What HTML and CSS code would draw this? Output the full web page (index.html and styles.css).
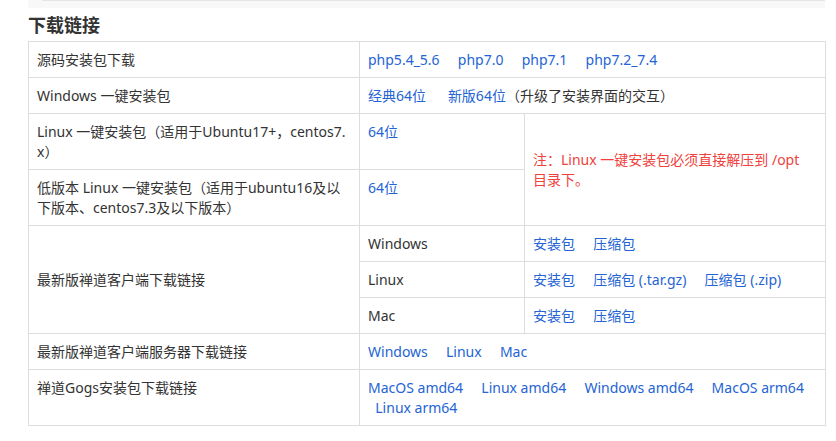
FILE: index.html
```html
<!DOCTYPE html>
<html lang="zh-CN">
<head>
<meta charset="utf-8">
<title>下载链接</title>
<link rel="stylesheet" href="styles.css">
</head>
<body>
<div class="page">
  <div class="codebar"><div class="scrollline"></div></div>
  <h2 class="title">下载链接</h2>
  <table class="dl">
    <colgroup><col class="c1"><col class="c2"><col class="c3"></colgroup>
    <tbody>
      <tr>
        <td>源码安装包下载</td>
        <td colspan="2"><a href="#">php5.4_5.6</a>&nbsp;&nbsp;&nbsp;&nbsp; <a href="#">php7.0</a>&nbsp;&nbsp;&nbsp;&nbsp; <a href="#">php7.1</a>&nbsp;&nbsp;&nbsp;&nbsp; <a href="#">php7.2_7.4</a></td>
      </tr>
      <tr>
        <td>Windows 一键安装包</td>
        <td colspan="2"><a href="#">经典64位</a>&nbsp;&nbsp;&nbsp;&nbsp;&nbsp; <a href="#">新版64位</a>（升级了安装界面的交互）</td>
      </tr>
      <tr>
        <td>Linux 一键安装包（适用于Ubuntu17+，centos7.x）</td>
        <td><a href="#">64位</a></td>
        <td rowspan="2" class="mid note">注：Linux 一键安装包必须直接解压到 /opt 目录下。</td>
      </tr>
      <tr>
        <td>低版本 Linux 一键安装包（适用于ubuntu16及以下版本、centos7.3及以下版本）</td>
        <td><a href="#">64位</a></td>
      </tr>
      <tr>
        <td rowspan="3" class="mid">最新版禅道客户端下载链接</td>
        <td>Windows</td>
        <td><a href="#">安装包</a>&nbsp;&nbsp;&nbsp;&nbsp; <a href="#">压缩包</a></td>
      </tr>
      <tr>
        <td>Linux</td>
        <td><a href="#">安装包</a>&nbsp;&nbsp;&nbsp;&nbsp; <a href="#">压缩包 (.tar.gz)</a>&nbsp;&nbsp;&nbsp;&nbsp; <a href="#">压缩包 (.zip)</a></td>
      </tr>
      <tr>
        <td>Mac</td>
        <td><a href="#">安装包</a>&nbsp;&nbsp;&nbsp;&nbsp; <a href="#">压缩包</a></td>
      </tr>
      <tr>
        <td>最新版禅道客户端服务器下载链接</td>
        <td colspan="2"><a href="#">Windows</a>&nbsp;&nbsp;&nbsp;&nbsp; <a href="#">Linux</a>&nbsp;&nbsp;&nbsp;&nbsp; <a href="#">Mac</a></td>
      </tr>
      <tr>
        <td>禅道Gogs安装包下载链接</td>
        <td colspan="2"><a href="#">MacOS amd64</a>&nbsp;&nbsp;&nbsp;&nbsp; <a href="#">Linux amd64</a>&nbsp;&nbsp;&nbsp;&nbsp; <a href="#">Windows amd64</a>&nbsp;&nbsp;&nbsp;&nbsp; <a href="#">MacOS arm64</a>&nbsp;&nbsp; &nbsp;&nbsp;<a href="#">Linux arm64</a></td>
      </tr>
    </tbody>
  </table>
</div>
</body>
</html>
```
FILE: styles.css
```css
html, body {
  margin: 0;
  padding: 0;
  background: #fff;
}
body {
  font-family: "Noto Sans", "Noto Sans CJK SC", sans-serif;
  font-size: 14px;
  color: #333;
}
.page {
  padding-left: 28px;
  width: 797px;
}
.codebar {
  height: 8px;
  background: #f8f8f8;
}
.scrollline {
  margin-left: 14px;
  border-top: 1px solid #e6e6e6;
}
.title {
  margin: 5px 0 4px;
  font-size: 18px;
  line-height: 24px;
  font-weight: bold;
  color: #333;
}
.dl {
  width: 797px;
  table-layout: fixed;
  border-collapse: collapse;
  border: 1px solid #ddd;
}
.dl .c1 { width: 331px; }
.dl .c2 { width: 165px; }
.dl .c3 { width: 301px; }
.dl td {
  border: 1px solid #ddd;
  padding: 8px 8px 7px;
  line-height: 20px;
  vertical-align: top;
  word-break: break-all;
}
.dl td.mid {
  vertical-align: middle;
}
.dl td.note {
  padding-right: 14px;
  color: #f0413c;
}
.dl a {
  color: #2464d4;
  text-decoration: none;
}
```
